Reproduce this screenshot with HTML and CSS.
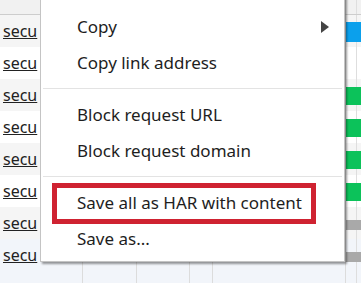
FILE: index.html
```html
<!DOCTYPE html>
<html lang="en">
<head>
    <meta charset="UTF-8">
    <title>Network - context menu</title>
    <link rel="stylesheet" href="styles.css">
</head>
<body>
    <div class="network">
        <div class="head">
            <div class="cell name"><span>Initiator</span></div>
            <div class="cell c2"></div>
            <div class="cell c3"></div>
            <div class="cell c4"></div>
            <div class="cell c5"></div>
            <div class="cell fall"></div>
        </div>
        <div class="row odd">
            <div class="cell name"><a href="#">secu</a></div>
            <div class="cell c2"></div><div class="cell c3"></div><div class="cell c4"></div><div class="cell c5"></div>
            <div class="cell fall"><div class="bar blue"></div></div>
        </div>
        <div class="row">
            <div class="cell name"><a href="#">secu</a></div>
            <div class="cell c2"></div><div class="cell c3"></div><div class="cell c4"></div><div class="cell c5"></div>
            <div class="cell fall"></div>
        </div>
        <div class="row odd">
            <div class="cell name"><a href="#">secu</a></div>
            <div class="cell c2"></div><div class="cell c3"></div><div class="cell c4"></div><div class="cell c5"></div>
            <div class="cell fall"><div class="bar green"></div></div>
        </div>
        <div class="row">
            <div class="cell name"><a href="#">secu</a></div>
            <div class="cell c2"></div><div class="cell c3"></div><div class="cell c4"></div><div class="cell c5"></div>
            <div class="cell fall"><div class="bar green"></div></div>
        </div>
        <div class="row odd">
            <div class="cell name"><a href="#">secu</a></div>
            <div class="cell c2"></div><div class="cell c3"></div><div class="cell c4"></div><div class="cell c5"></div>
            <div class="cell fall"><div class="bar green"></div></div>
        </div>
        <div class="row">
            <div class="cell name"><a href="#">secu</a></div>
            <div class="cell c2"></div><div class="cell c3"></div><div class="cell c4"></div><div class="cell c5"></div>
            <div class="cell fall"><div class="bar green"></div></div>
        </div>
        <div class="row odd">
            <div class="cell name"><a href="#">secu</a></div>
            <div class="cell c2"></div><div class="cell c3"></div><div class="cell c4"></div><div class="cell c5"></div>
            <div class="cell fall"><div class="bar gray"></div></div>
        </div>
        <div class="row sel">
            <div class="cell name"><a href="#">secu</a></div>
            <div class="cell c2"></div><div class="cell c3"></div><div class="cell c4"></div><div class="cell c5"></div>
            <div class="cell fall"><div class="bar gray"></div></div>
        </div>
        <div class="row sel last">
            <div class="cell name"></div>
            <div class="cell c2"></div><div class="cell c3"></div><div class="cell c4"></div><div class="cell c5"></div>
            <div class="cell fall"></div>
        </div>
    </div>

    <!-- menu contextual aberto sobre a tabela -->
    <div class="menu">
        <div class="item">Copy <span class="arrow"></span></div>
        <div class="item">Copy link address</div>
        <div class="sep"></div>
        <div class="item">Block request URL</div>
        <div class="item">Block request domain</div>
        <div class="sep"></div>
        <div class="item marked">Save all as HAR with content</div>
        <div class="item">Save as...</div>
    </div>
</body>
</html>
```

FILE: styles.css
```css
body {
    margin: 0;
    width: 361px;
    height: 283px;
    overflow: hidden;
    position: relative;
    background: #fff;
    font-family: "Noto Sans", "Open Sans", sans-serif;
    color: #222;
}
.network {
    display: flex;
    flex-direction: column;
}
.head, .row {
    display: flex;
}
.head {
    height: 14px;
    background: #f1f1f1;
    border-bottom: 1px solid #cdcdcd;
    overflow: hidden;
}
.head span {
    display: block;
    margin-top: -15px;
    font-size: 16px;
    line-height: 18px;
    padding-left: 3px;
}
.row {
    height: 32px;
}
.row.odd {
    background: #f5f5f5;
}
.row.sel {
    background: #f2f5fa;
}
.row.last {
    height: 12px;
}
.cell {
    flex: none;
    border-right: 1px solid #dcdcdc;
    box-sizing: border-box;
}
.name {
    width: 83px;
    overflow: hidden;
    white-space: nowrap;
}
.name a {
    display: inline-block;
    padding-left: 3px;
    font-size: 16px;
    line-height: 32px;
    color: #222;
    text-decoration: underline;
}
.c2 { width: 54px; }
.c3 { width: 53px; }
.c4 { width: 23px; }
.c5 { width: 133px; }
.fall {
    flex: 1;
    border-right: none;
    background: linear-gradient(to right, transparent 10px, #dedede 10px, #dedede 11px, transparent 11px);
}
.bar {
    margin-top: 8px;
    height: 18px;
}
.bar.blue {
    margin-top: 7px;
    height: 20px;
    background: #0ba0ec;
}
.bar.green {
    background: #0cc25a;
}
.bar.gray {
    margin-top: 13px;
    height: 10px;
    background: #a9a9a9;
}

.menu {
    position: absolute;
    left: 40px;
    top: -20px;
    width: 305px;
    box-sizing: border-box;
    padding: 28px 0 4px;
    background: #fff;
    border: 1px solid #c4c4c4;
    box-shadow: 2px 2px 2px rgba(0, 0, 0, 0.4);
    font-size: 17px;
}
.item {
    position: relative;
    height: 36px;
    line-height: 36px;
    padding-left: 36px;
    color: #1e1e1e;
    white-space: nowrap;
}
.arrow {
    position: absolute;
    right: 15px;
    top: 12px;
    width: 0;
    height: 0;
    border-top: 6px solid transparent;
    border-bottom: 6px solid transparent;
    border-left: 8px solid #444;
}
.sep {
    height: 1px;
    margin: 7px 2px 8px;
    background: #e3e3e3;
}
.marked::after {
    content: "";
    position: absolute;
    left: 11px;
    top: -2px;
    width: 264px;
    height: 41px;
    box-sizing: border-box;
    border: 5px solid #cf2231;
}
```
